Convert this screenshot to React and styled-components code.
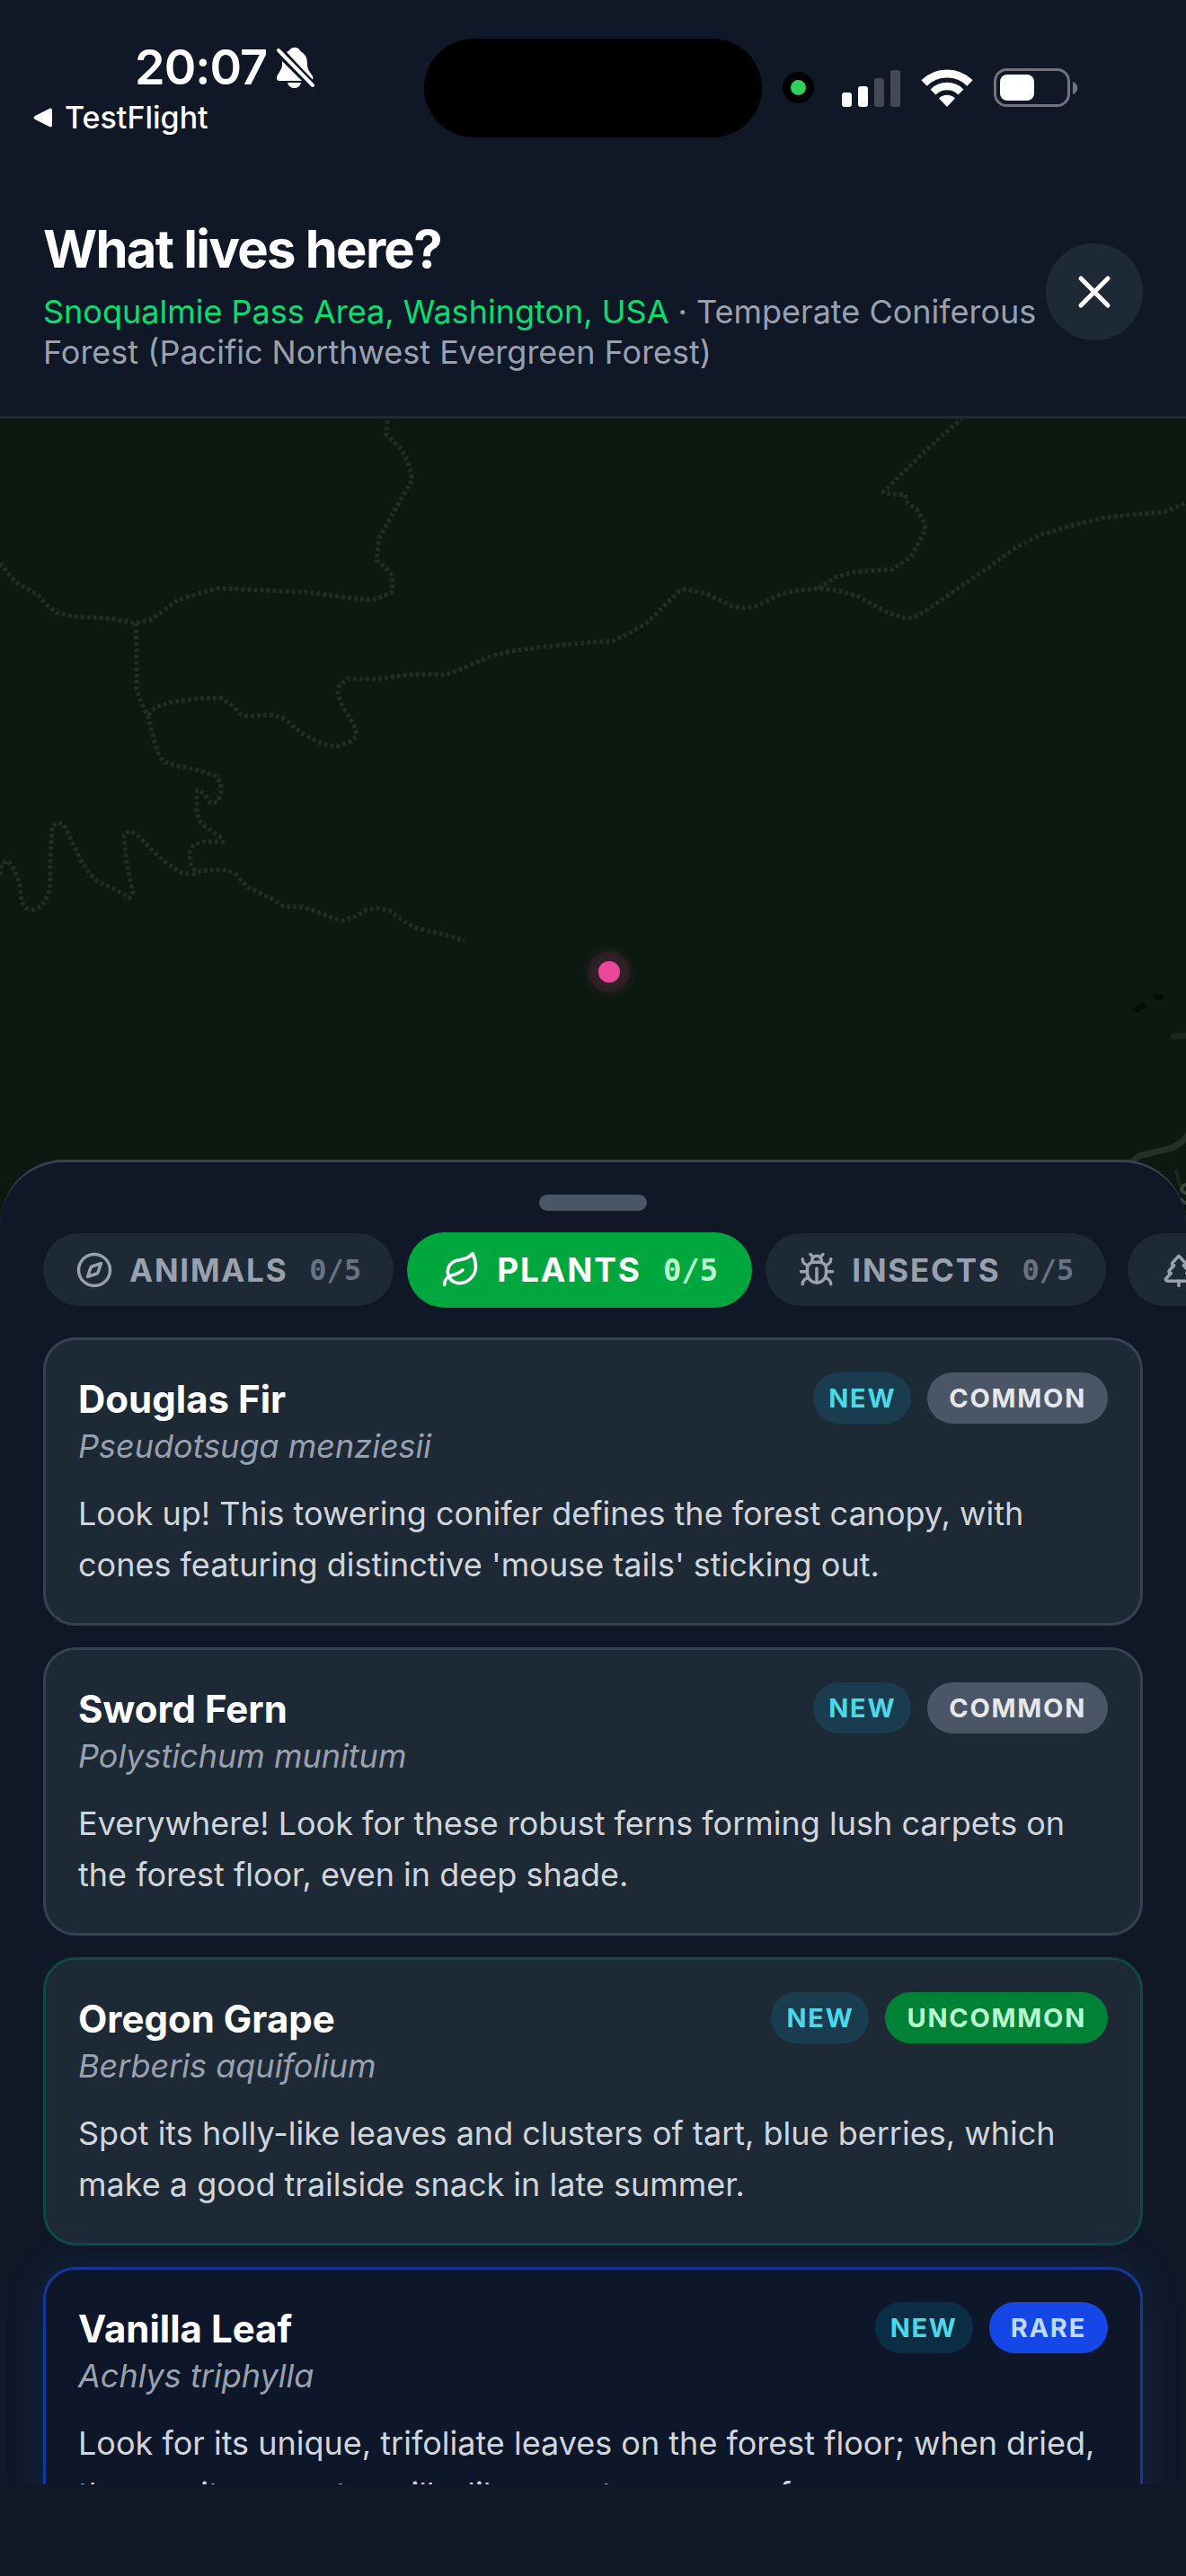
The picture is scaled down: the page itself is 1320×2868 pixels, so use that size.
import React, { useState } from "react";
import styled, { createGlobalStyle, css } from "styled-components";
import { Bug, Compass, Leaf, TreePine, X } from "lucide-react";

const GlobalStyle = createGlobalStyle`
  *, *::before, *::after { box-sizing: border-box; }
  body {
    margin: 0;
    background: #101727;
    color: #ffffff;
    font-family: Inter, "Liberation Sans", sans-serif;
  }
  h1, h2, p { margin: 0; }
  button { font: inherit; border: 0; padding: 0; cursor: pointer; }
`;

const Screen = styled.div`
  display: flex;
  flex-direction: column;
  height: 100vh;
  overflow: hidden;
  background: #101727;
`;

/* ---------- status bar ---------- */

const StatusBar = styled.div`
  display: grid;
  grid-template-columns: 1fr 376px 1fr;
  align-items: center;
  padding: 42px 0 34px;
`;

const StatusLeft = styled.div`
  padding-left: 36px;
`;

const ClockRow = styled.div`
  display: flex;
  align-items: center;
  gap: 10px;
  padding-left: 114px;
  font-size: 54px;
  font-weight: 600;
  line-height: 66px;
  letter-spacing: -1px;
`;

const BackLink = styled.a`
  display: flex;
  align-items: center;
  gap: 12px;
  color: #ffffff;
  font-size: 34px;
  font-weight: 500;
  line-height: 45px;
  text-decoration: none;
`;

const Island = styled.div`
  height: 110px;
  border-radius: 55px;
  background: #000000;
`;

const StatusRight = styled.div`
  display: flex;
  align-items: center;
  gap: 23px;
  padding-left: 23px;
`;

const CameraDot = styled.span`
  width: 35px;
  height: 35px;
  margin-right: 8px;
  border: 9px solid #000000;
  border-radius: 50%;
  background: #30d158;
`;

/* ---------- header ---------- */

const Header = styled.header`
  display: flex;
  align-items: center;
  justify-content: space-between;
  gap: 6px;
  padding: 48px;
  border-bottom: 3px solid #1e2939;
`;

const Heading = styled.h1`
  margin-bottom: 6px;
  font-size: 58px;
  font-weight: 700;
  line-height: 84px;
  letter-spacing: -0.03em;
`;

const Place = styled.p`
  color: #99a1af;
  font-size: 36px;
  line-height: 45px;
`;

const PlaceName = styled.span`
  color: #05df72;
`;

const CloseButton = styled.button`
  display: flex;
  flex: none;
  align-items: center;
  justify-content: center;
  width: 108px;
  height: 108px;
  border-radius: 50%;
  background: #1e2936;
  color: #ffffff;
`;

/* ---------- map ---------- */

const MapArea = styled.main`
  flex: 1;
  min-height: 0;
  margin-bottom: -72px;
  background: #0b1910;
`;

const MapCanvas = styled.svg`
  display: block;
  width: 100%;
  height: 100%;
`;

/* ---------- bottom sheet ---------- */

const Sheet = styled.section`
  position: relative;
  display: flex;
  flex: none;
  flex-direction: column;
  height: 55vh;
  padding: 36px 0 102px;
  border-top: 3px solid #364153;
  border-radius: 72px 72px 0 0;
  background: #101727;
`;

const Handle = styled.div`
  flex: none;
  align-self: center;
  width: 120px;
  height: 18px;
  border-radius: 9px;
  background: #4a5565;
`;

const Tabs = styled.div`
  display: flex;
  flex: none;
  align-items: center;
  gap: 24px;
  height: 84px;
  margin: 24px 0 33px;
  padding: 0 48px;
  overflow: hidden;
`;

const Tab = styled.button`
  display: flex;
  flex: none;
  align-items: center;
  gap: 18px;
  height: 81px;
  padding: 0 36px;
  border-radius: 42px;
  background: #1e2936;
  color: #99a1af;
  font-size: 35px;
  font-weight: 700;
  letter-spacing: 0.05em;

  ${(p) =>
    p.$active &&
    css`
      height: 84px;
      margin: 0 -9px;
      padding: 0 38px;
      background: #00a63e;
      color: #ffffff;
      font-size: 37px;
    `}
`;

const Count = styled.span`
  margin-left: 6px;
  color: ${(p) => (p.$active ? "#b9f8cf" : "#6a7282")};
  font-family: "DejaVu Sans Mono", monospace;
  font-size: ${(p) => (p.$active ? "34px" : "32px")};
  letter-spacing: 0;
`;

const List = styled.div`
  display: flex;
  flex: 1;
  flex-direction: column;
  gap: 24px;
  min-height: 0;
  padding: 0 48px;
  overflow-y: auto;
  scrollbar-width: none;
`;

const tones = {
  common: { border: "#364153", card: "#1e2936", badge: "#4a5565", text: "#e5e7eb" },
  uncommon: { border: "#0d4a40", card: "#1e2936", badge: "#008236", text: "#b9f8cf" },
  rare: { border: "#14389a", card: "#0e172a", badge: "#1447e6", text: "#bedbff" },
};

const Card = styled.article`
  flex: none;
  padding: 36px;
  border: 3px solid ${(p) => tones[p.$tone].border};
  border-radius: 36px;
  background: ${(p) => tones[p.$tone].card};
  box-shadow: ${(p) => (p.$tone === "rare" ? "0 0 45px rgba(43, 127, 255, 0.15)" : "none")};
`;

const CardTop = styled.div`
  display: flex;
  align-items: flex-start;
  justify-content: space-between;
  margin-bottom: 24px;
`;

const Name = styled.h2`
  font-size: 42px;
  font-weight: 700;
  line-height: 60px;
`;

const Latin = styled.p`
  color: #99a1af;
  font-size: 36px;
  font-style: italic;
  line-height: 45px;
`;

const Badges = styled.div`
  display: flex;
  gap: 18px;
`;

const Badge = styled.span`
  padding: 0 24px;
  border-radius: 30px;
  background: ${(p) => tones[p.$tone].badge};
  color: ${(p) => tones[p.$tone].text};
  font-size: 29px;
  font-weight: 700;
  line-height: 57px;
  letter-spacing: 0.06em;
`;

const NewBadge = styled(Badge)`
  padding: 0 17px;
  background: rgba(0, 184, 219, 0.15);
  color: #4cd8e9;
`;

const Description = styled.p`
  color: #d1d5dc;
  font-size: 36px;
  line-height: 57px;
`;

/* ---------- drawings ---------- */

const BellOff = () => (
  <svg width="44" height="46" viewBox="0 0 44 46" fill="#ffffff" aria-hidden="true">
    <path d="M12 6C14 5 15 4 16 3c2-3 8-3 10 0 1 2 2 2 4 4 4 3 5 7 5 13 0 6 4 9 6 13 1 2 0 4-1 4z" />
    <path d="M7 16v4c0 7-6 10-6 15 0 2 1 3 3 3h25z" />
    <path d="M13 40h15c-1 4-4 6-7.500 6S14 44 13 40z" />
    <path d="M3 4l38 39" stroke="#101727" strokeWidth="9" />
    <path d="M3 4l38 39" stroke="#ffffff" strokeWidth="4" strokeLinecap="round" />
  </svg>
);

const Signal = () => (
  <svg width="65" height="42" viewBox="0 0 65 42" fill="#ffffff" aria-hidden="true">
    <rect x="0" y="26" width="11" height="16" rx="3" />
    <rect x="18" y="19" width="11" height="23" rx="3" />
    <rect x="36" y="10" width="11" height="32" rx="3" opacity="0.22" />
    <rect x="54" y="1" width="11" height="41" rx="3" opacity="0.22" />
  </svg>
);

const Wifi = () => (
  <svg width="58" height="42" viewBox="0 0 58 42" fill="none" aria-hidden="true">
    <path d="M3.500 15.500a36 36 0 0 1 51 0" stroke="#ffffff" strokeWidth="9" />
    <path d="M13.500 25.500a22 22 0 0 1 31 0" stroke="#ffffff" strokeWidth="8.500" />
    <path d="M29 42l-9-9.500c5-5 13-5 18 0z" fill="#ffffff" />
  </svg>
);

const Battery = () => (
  <svg width="94" height="44" viewBox="0 0 94 44" aria-hidden="true">
    <rect x="1.500" y="1.500" width="82" height="40" rx="13" fill="none" stroke="#71747f" strokeWidth="3" />
    <path d="M88 15c7 2 7 12 0 14z" fill="#71747f" />
    <rect x="7" y="7" width="38" height="29" rx="8" fill="#ffffff" />
  </svg>
);

const BackArrow = () => (
  <svg width="24" height="24" viewBox="0 0 24 24" fill="#ffffff" aria-hidden="true">
    <path d="M22 4v16c0 2-1 3-3 2L3 14c-2-1-2-3 0-4l16-8c2-1 3 0 3 2z" />
  </svg>
);

const trails = [
  "0,161 17,182 42,196 50,206 63,216 80,220 126,223 151,228 168,224 198,202 220,195 242,189 290,191 349,194 390,200 415,202 436,194 437,175 429,166 419,158 422,133 438,104 459,68 455,52 447,34 430,18 431,0",
  "151,228 152,263 152,301 158,318 165,333 172,359 177,375 184,383 194,386 215,390 240,398 246,406 246,416 242,427 234,428 227,417 219,414 219,439 223,450 248,468 248,471 225,471 215,475 211,484 211,493 217,504",
  "165,330 173,321 194,315 219,312 246,311 259,320 268,329 274,331 303,330 316,334 337,351 358,362 375,365 391,359 397,353 394,341 381,320 376,305 378,296 387,290 421,290 455,285 497,285 520,276 547,264 575,258 606,254 660,249 681,248 698,240 719,228 740,208 755,193 763,190 786,195 815,209 828,211 841,209 870,195 890,191 911,189 930,191 955,198 988,216 1009,223 1020,220 1035,211 1072,185 1100,166 1131,143 1160,129 1190,120 1225,111 1258,107 1296,104 1320,94",
  "911,189 929,177 950,171 975,169 993,168 1014,154 1030,124 1028,114 1021,102 1010,94 1007,84 999,85 983,82 1030,36 1070,0",
  "0,508 2,496 8,492 16,502 22,519 24,538 29,545 38,547 47,542 54,529 56,519 56,492 58,454 63,450 70,451 76,462 90,492 100,507 109,515 130,525 144,534 148,527 141,496 138,464 144,459 152,463 181,492 202,506 215,507 223,504 240,502 254,503 263,508 276,522 303,535 316,543 337,544 358,551 372,557 382,559 396,554 408,547 419,545 434,548 450,560 463,567 492,574 517,581",
];

const Map = () => (
  <MapCanvas viewBox="0 0 1320 898" preserveAspectRatio="xMidYMin slice" role="img" aria-label="Map">
    <defs>
      <radialGradient id="halo">
        <stop offset="0.4" stopColor="#ec4899" stopOpacity="0.18" />
        <stop offset="0.72" stopColor="#ec4899" stopOpacity="0.14" />
        <stop offset="0.8" stopColor="#ec4899" stopOpacity="0.05" />
        <stop offset="1" stopColor="#ec4899" stopOpacity="0" />
      </radialGradient>
    </defs>
    <g fill="none" stroke="#1f2d24" strokeWidth="5" strokeDasharray="4 3" strokeLinejoin="round">
      {trails.map((points) => (
        <polyline key={points} points={points} />
      ))}
    </g>
    <path d="M1262 657l11-8 4 5-11 8zM1284 640l10 1v6l-10-1z" fill="#030b05" />
    <path d="M1306 688l16-1" stroke="#1a271e" strokeWidth="7" strokeLinecap="round" />
    <path d="M1254 832l14-11 37-9 12-8 6-8" fill="none" stroke="#232f27" strokeWidth="7" strokeLinejoin="round" />
    <path d="M1309 837l4 17" stroke="#1a271e" strokeWidth="4" />
    <text x="1311" y="875" fill="#38433b" fontSize="32" fontWeight="600">S</text>
    <circle cx="678" cy="616" r="30" fill="url(#halo)" />
    <circle cx="678" cy="616" r="12" fill="#ec4899" />
  </MapCanvas>
);

/* ---------- data ---------- */

const categories = [
  { id: "animals", label: "ANIMALS", Icon: Compass },
  { id: "plants", label: "PLANTS", Icon: Leaf },
  { id: "insects", label: "INSECTS", Icon: Bug },
  { id: "trees", label: "TREES", Icon: TreePine },
];

const species = [
  {
    name: "Douglas Fir",
    latin: "Pseudotsuga menziesii",
    tone: "common",
    text: "Look up! This towering conifer defines the forest canopy, with cones featuring distinctive 'mouse tails' sticking out.",
  },
  {
    name: "Sword Fern",
    latin: "Polystichum munitum",
    tone: "common",
    text: "Everywhere! Look for these robust ferns forming lush carpets on the forest floor, even in deep shade.",
  },
  {
    name: "Oregon Grape",
    latin: "Berberis aquifolium",
    tone: "uncommon",
    text: "Spot its holly-like leaves and clusters of tart, blue berries, which make a good trailside snack in late summer.",
  },
  {
    name: "Vanilla Leaf",
    latin: "Achlys triphylla",
    tone: "rare",
    text: "Look for its unique, trifoliate leaves on the forest floor; when dried, they emit a sweet vanilla-like scent, a rare perfume.",
  },
];

export default function App() {
  const [active, setActive] = useState("plants");

  return (
    <Screen>
      <GlobalStyle />
      <StatusBar>
        <StatusLeft>
          <ClockRow>
            <span>20:07</span>
            <BellOff />
          </ClockRow>
          <BackLink href="#testflight">
            <BackArrow />
            TestFlight
          </BackLink>
        </StatusLeft>
        <Island />
        <StatusRight>
          <CameraDot />
          <Signal />
          <Wifi />
          <Battery />
        </StatusRight>
      </StatusBar>

      <Header>
        <div>
          <Heading>What lives here?</Heading>
          <Place>
            <PlaceName>Snoqualmie Pass Area, Washington, USA</PlaceName> · Temperate Coniferous
            Forest (Pacific Northwest Evergreen Forest)
          </Place>
        </div>
        <CloseButton type="button" aria-label="Close">
          <X size={60} />
        </CloseButton>
      </Header>

      <MapArea>
        <Map />
      </MapArea>

      <Sheet>
        <Handle />
        <Tabs role="tablist">
          {categories.map(({ id, label, Icon }) => (
            <Tab
              key={id}
              type="button"
              role="tab"
              aria-selected={id === active}
              $active={id === active}
              onClick={() => setActive(id)}
            >
              <Icon size={id === active ? 44 : 42} />
              {label}
              <Count $active={id === active}>0/5</Count>
            </Tab>
          ))}
        </Tabs>
        <List>
          {species.map((item) => (
            <Card key={item.name} $tone={item.tone}>
              <CardTop>
                <div>
                  <Name>{item.name}</Name>
                  <Latin>{item.latin}</Latin>
                </div>
                <Badges>
                  <NewBadge $tone={item.tone}>NEW</NewBadge>
                  <Badge $tone={item.tone}>{item.tone.toUpperCase()}</Badge>
                </Badges>
              </CardTop>
              <Description>{item.text}</Description>
            </Card>
          ))}
        </List>
      </Sheet>
    </Screen>
  );
}
